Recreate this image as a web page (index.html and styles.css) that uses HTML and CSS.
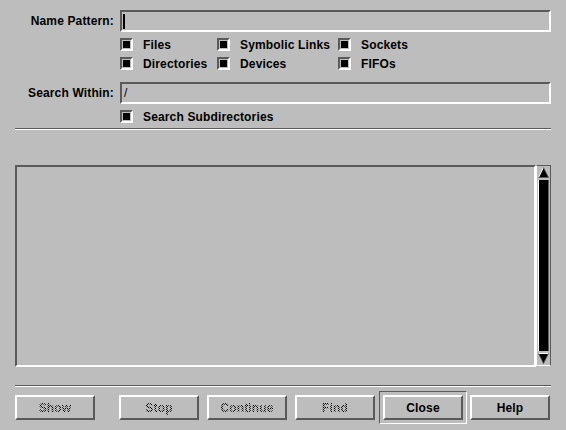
FILE: index.html
```html
<!DOCTYPE html>
<html>
<head>
<meta charset="utf-8">
<link rel="stylesheet" href="styles.css">
</head>
<body>
<div class="dialog">
  <div class="field-row">
    <label class="label">Name Pattern:</label>
    <div class="textfield"><span class="cursor"></span></div>
  </div>

  <div class="checks">
    <div class="check"><span class="box"><span class="mark"></span></span>Files</div>
    <div class="check"><span class="box"><span class="mark"></span></span>Symbolic Links</div>
    <div class="check"><span class="box"><span class="mark"></span></span>Sockets</div>
    <div class="check"><span class="box"><span class="mark"></span></span>Directories</div>
    <div class="check"><span class="box"><span class="mark"></span></span>Devices</div>
    <div class="check"><span class="box"><span class="mark"></span></span>FIFOs</div>
  </div>

  <div class="field-row search-row">
    <label class="label">Search Within:</label>
    <div class="textfield"><span class="value">/</span></div>
  </div>

  <div class="checks single">
    <div class="check"><span class="box"><span class="mark"></span></span>Search Subdirectories</div>
  </div>

  <div class="separator sep-top"></div>

  <div class="list-area">
    <div class="list"></div>
    <div class="scrollbar">
      <svg class="arrow" width="13" height="13" viewBox="0 0 13 13">
        <polygon points="6.5,1.5 11.5,11.5 1.5,11.5" fill="#000"/>
        <polyline points="1.5,11.5 6.5,1.5" stroke="#fff" stroke-width="1" fill="none"/>
        <polyline points="6.5,1.5 11.5,11.5 1.5,11.5" stroke="#5a5a5a" stroke-width="1" fill="none"/>
      </svg>
      <div class="slider"></div>
      <svg class="arrow" width="13" height="13" viewBox="0 0 13 13">
        <polygon points="1.5,1.5 11.5,1.5 6.5,11.5" fill="#000"/>
        <polyline points="1.5,1.5 11.5,1.5" stroke="#fff" stroke-width="1" fill="none"/>
        <polyline points="11.5,1.5 6.5,11.5 1.5,1.5" stroke="#5a5a5a" stroke-width="1" fill="none"/>
      </svg>
    </div>
  </div>

  <div class="separator sep-bottom"></div>

  <div class="buttons">
    <div class="btn disabled b-show"><span>Show</span></div>
    <div class="btn disabled b-stop"><span>Stop</span></div>
    <div class="btn disabled b-cont"><span>Continue</span></div>
    <div class="btn disabled b-find"><span>Find</span></div>
    <div class="default-frame"><div class="btn"><span>Close</span></div></div>
    <div class="btn b-help"><span>Help</span></div>
  </div>
</div>
</body>
</html>
```

FILE: styles.css
```css
html, body {
  margin: 0;
  padding: 0;
}
body {
  width: 566px;
  height: 430px;
  overflow: hidden;
  background: #bdbdbd;
  font-family: "Liberation Sans", Arial, sans-serif;
  font-weight: bold;
  font-size: 12px;
  letter-spacing: 0.15px;
  color: #000;
}
.dialog {
  padding: 10px 15px 0 15px;
  display: flex;
  flex-direction: column;
}
.field-row {
  display: grid;
  grid-template-columns: 99px 431px;
  column-gap: 6px;
  align-items: center;
  height: 22px;
}
.label {
  text-align: right;
  white-space: nowrap;
}
.textfield {
  box-sizing: border-box;
  height: 22px;
  border-top: 2px solid #5a5a5a;
  border-left: 2px solid #5a5a5a;
  border-bottom: 2px solid #fff;
  border-right: 2px solid #fff;
  display: flex;
  align-items: center;
  padding-left: 1px;
  font-weight: normal;
}
.cursor {
  display: block;
  width: 2px;
  height: 15px;
  background: #000;
}
.value {
  font-weight: normal;
  font-size: 12px;
  padding-left: 1px;
}
.checks {
  margin-left: 105px;
  margin-top: 6px;
  display: grid;
  grid-template-columns: 97px 121px auto;
  row-gap: 6px;
}
.checks.single {
  grid-template-columns: auto;
}
.search-row {
  margin-top: 12px;
}
.check {
  display: flex;
  align-items: center;
  height: 13px;
  white-space: nowrap;
  gap: 10px;
}
.box {
  box-sizing: border-box;
  width: 13px;
  height: 13px;
  border-top: 2px solid #5a5a5a;
  border-left: 2px solid #5a5a5a;
  border-bottom: 2px solid #fff;
  border-right: 2px solid #fff;
  padding: 1px;
  flex: none;
}
.mark {
  display: block;
  width: 7px;
  height: 7px;
  background: #000;
}
.separator {
  height: 1px;
  border-top: 1px solid #5a5a5a;
  background: #fff;
}
.sep-top {
  margin-top: 5px;
}
.list-area {
  margin-top: 35px;
  height: 202px;
  display: flex;
}
.list {
  box-sizing: border-box;
  width: 521px;
  height: 202px;
  border-top: 2px solid #5a5a5a;
  border-left: 2px solid #5a5a5a;
  border-bottom: 2px solid #fff;
  border-right: 2px solid #fff;
}
.scrollbar {
  box-sizing: border-box;
  width: 15px;
  height: 201px;
  display: flex;
  flex-direction: column;
  border-top: 1px solid #5a5a5a;
  border-left: 1px solid #fff;
  border-bottom: 1px solid #fff;
  border-right: 1px solid #5a5a5a;
  background: #bdbdbd;
}
.arrow {
  display: block;
  flex: none;
  width: 13px;
  height: 13px;
}
.slider {
  flex: 1;
  margin: 1px 1px;
  background: #000;
  border-left: 1px solid #fff;
  border-right: 1px solid #5a5a5a;
}
.sep-bottom {
  margin-top: 18px;
}
.buttons {
  margin-top: 4px;
  height: 33px;
  display: flex;
  align-items: center;
}
.btn {
  box-sizing: border-box;
  width: 80px;
  height: 25px;
  border-top: 2px solid #fff;
  border-left: 2px solid #fff;
  border-bottom: 2px solid #5a5a5a;
  border-right: 2px solid #5a5a5a;
  display: flex;
  align-items: center;
  justify-content: center;
  flex: none;
}
.btn.disabled span {
  background-image: repeating-conic-gradient(#000 0 25%, transparent 0 50%);
  background-size: 2px 2px;
  -webkit-background-clip: text;
  background-clip: text;
  color: transparent;
}
.b-stop { margin-left: 24px; }
.b-cont { margin-left: 8px; }
.b-find { margin-left: 8px; }
.default-frame {
  box-sizing: border-box;
  margin-left: 4px;
  width: 88px;
  height: 33px;
  border-top: 1px solid #5a5a5a;
  border-left: 1px solid #5a5a5a;
  border-bottom: 1px solid #fff;
  border-right: 1px solid #fff;
  padding: 3px;
  display: flex;
  flex: none;
}
.b-help { margin-left: 3px; }
```
